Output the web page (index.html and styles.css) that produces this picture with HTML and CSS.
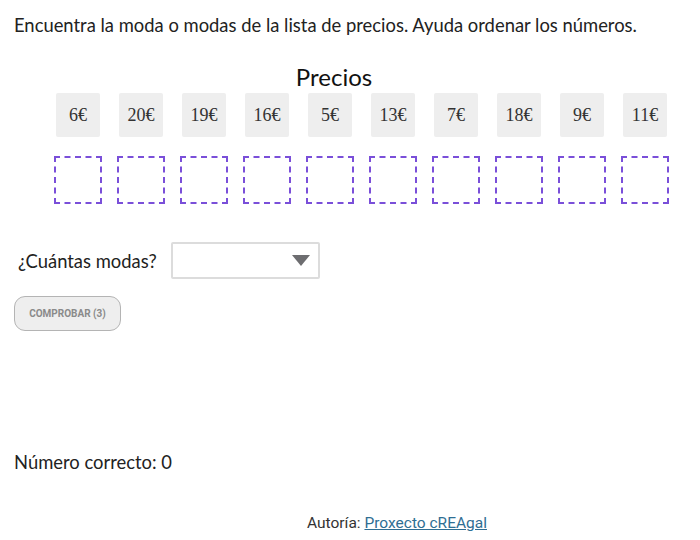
FILE: index.html
```html
<!DOCTYPE html>
<html lang="es">
<head>
  <meta charset="UTF-8">
  <title>Moda de precios</title>
  <link rel="stylesheet" href="styles.css">
</head>
<body>
  <p class="consigna">Encuentra la moda o modas de la lista de precios. Ayuda ordenar los números.</p>

  <div class="tablero">
    <h2 class="titulo">Precios</h2>
    <div class="fila">
      <div class="ficha">6€</div>
      <div class="ficha">20€</div>
      <div class="ficha">19€</div>
      <div class="ficha">16€</div>
      <div class="ficha">5€</div>
      <div class="ficha">13€</div>
      <div class="ficha">7€</div>
      <div class="ficha">18€</div>
      <div class="ficha">9€</div>
      <div class="ficha">11€</div>
    </div>
    <div class="fila huecos">
      <div class="hueco"></div>
      <div class="hueco"></div>
      <div class="hueco"></div>
      <div class="hueco"></div>
      <div class="hueco"></div>
      <div class="hueco"></div>
      <div class="hueco"></div>
      <div class="hueco"></div>
      <div class="hueco"></div>
      <div class="hueco"></div>
    </div>
  </div>

  <div class="pregunta">
    <label for="modas">¿Cuántas modas?</label>
    <div class="selector" id="modas">
      <span class="flecha"></span>
    </div>
  </div>

  <button class="comprobar">COMPROBAR (3)</button>

  <p class="resultado">Número correcto: 0</p>

  <p class="autoria">Autoría: <a href="#">Proxecto cREAgal</a></p>
</body>
</html>
```

FILE: styles.css
```css
body {
  margin: 0;
  padding: 14px;
  font-family: Lato, "DejaVu Sans", sans-serif;
  color: #222;
  background-color: #fff;
}
.consigna {
  margin: 0;
  font-size: 18.4px;
  line-height: 22px;
}
.tablero {
  width: 640px;
}
.titulo {
  margin: 27px 0 0;
  text-align: center;
  font-weight: normal;
  font-size: 24px;
  line-height: 28px;
  color: #111;
}
.fila {
  display: flex;
  gap: 15px;
  margin: 2px 0 0 40px;
}
.ficha {
  flex: none;
  width: 44px;
  height: 44px;
  margin: 0 2px;
  background-color: #eeeeee;
  border-radius: 2px;
  display: flex;
  align-items: center;
  justify-content: center;
  font-family: "Liberation Serif", serif;
  font-size: 18px;
  color: #333;
}
.huecos {
  margin-top: 19px;
}
.hueco {
  flex: none;
  width: 48px;
  height: 48px;
  box-sizing: border-box;
  border: 2px dashed #7a4fd9;
}
.pregunta {
  display: flex;
  align-items: center;
  gap: 14px;
  margin-top: 38px;
}
.pregunta label {
  font-size: 18.4px;
  padding-left: 4px;
}
.selector {
  width: 149px;
  height: 37px;
  box-sizing: border-box;
  border: 2px solid #dcdcdc;
  border-radius: 2px;
  display: flex;
  align-items: center;
  justify-content: flex-end;
  padding-right: 8px;
}
.flecha {
  width: 0;
  height: 0;
  border-left: 9px solid transparent;
  border-right: 9px solid transparent;
  border-top: 11px solid #6d6d70;
}
.comprobar {
  display: block;
  margin-top: 17px;
  width: 107px;
  height: 35px;
  background-color: #eeeeee;
  border: 1px solid #b4b4b4;
  border-radius: 11px;
  font-family: Roboto, sans-serif;
  font-weight: bold;
  font-size: 10px;
  color: #8a8a8a;
}
.resultado {
  margin: 120px 0 0;
  font-size: 18.4px;
  line-height: 22px;
}
.autoria {
  margin: 41px 0 0;
  padding-left: 293px;
  font-family: Roboto, sans-serif;
  font-size: 15.5px;
  line-height: 18px;
  color: #333;
}
.autoria a {
  color: #2f6e93;
}
```
